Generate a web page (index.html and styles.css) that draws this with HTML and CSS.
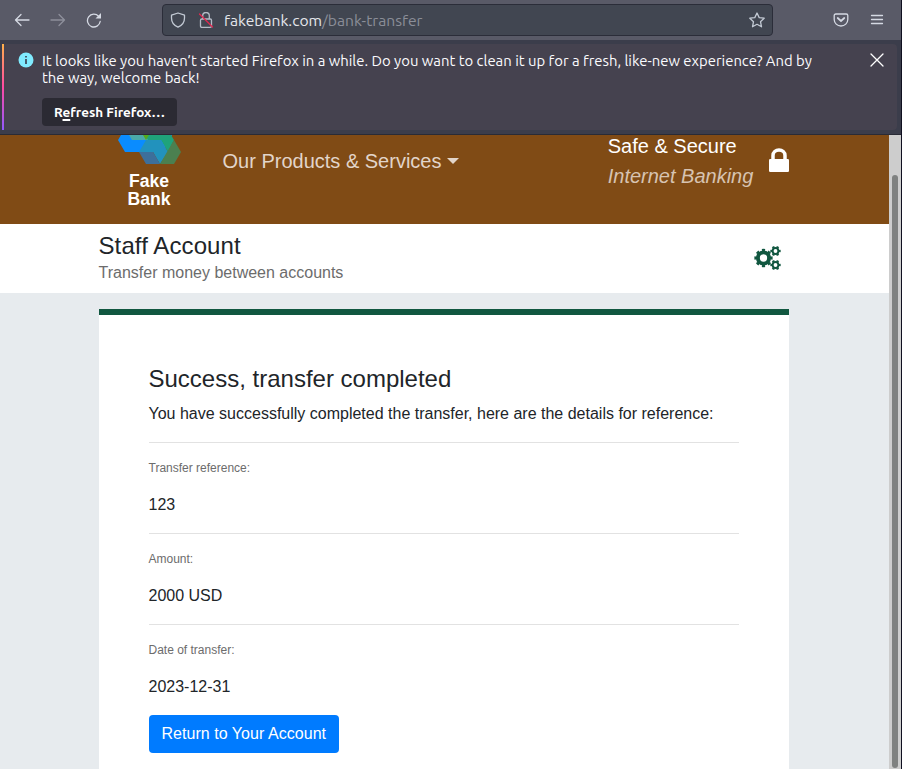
FILE: index.html
```html
<!DOCTYPE html>
<html lang="en">
<head>
<meta charset="utf-8">
<title>Fake Bank</title>
<link rel="stylesheet" href="styles.css">
</head>
<body>
<div class="window">
  <div class="toolbar">
    <svg class="ico back" viewBox="0 0 16 16"><path d="M15 8H1.500M7 2.500L1.500 8L7 13.500"/></svg>
    <svg class="ico forward" viewBox="0 0 16 16"><path d="M1 8H14.500M9 2.500L14.500 8L9 13.500"/></svg>
    <svg class="ico reload" viewBox="0 0 16 16"><path d="M14.200 9.500A6.400 6.400 0 1 1 12.700 4.400"/><path class="solid" d="M15 1V6.500H9.500Z"/></svg>
    <div class="urlbar">
      <svg class="ico shield" viewBox="0 0 16 16"><path d="M8 1L14.500 3.200V6C14.500 10.500 12 13.500 8 15.200C4 13.500 1.500 10.500 1.500 6V3.200Z"/></svg>
      <svg class="ico insecure" viewBox="0 0 16 16"><path d="M4.700 7V3.800A3.300 3.300 0 0 1 11.300 3.800V7M3.800 7H12.200Q13.500 7 13.500 8.300V14Q13.500 15.300 12.200 15.300H3.800Q2.500 15.300 2.500 14V8.300Q2.500 7 3.800 7Z"/><path class="slash" d="M1.500 2L14.500 15"/></svg>
      <span class="url">fakebank.com<span class="path">/bank-transfer</span></span>
      <svg class="ico star" viewBox="0 0 16 16"><path d="M8 1L10.200 5.600L15.200 6.200L11.500 9.700L12.500 14.800L8 12.300L3.500 14.800L4.500 9.700L.8 6.200L5.800 5.600Z"/></svg>
    </div>
    <svg class="ico pocket" viewBox="0 0 16 16"><path d="M2.800 2H13.200Q14.800 2 14.800 3.600V7.500A6.800 6.500 0 0 1 1.200 7.500V3.600Q1.200 2 2.800 2Z"/><path class="bold" d="M4.700 6L8 9L11.300 6"/></svg>
    <svg class="ico menu" viewBox="0 0 16 16"><path d="M2.500 3.500H13.500M2.500 7.500H13.500M2.500 11.500H13.500"/></svg>
  </div>
  <div class="notice-area">
    <div class="notice">
      <svg class="info" viewBox="0 0 16 16"><circle cx="8" cy="8" r="7.500"/><path d="M8 4V5.500M8 7V12"/></svg>
      <div class="notice-body">
        <p>It looks like you haven’t started Firefox in a while. Do you want to clean it up for a fresh, like-new experience? And by<br>the way, welcome back!</p>
        <button class="refresh">R<u>e</u>fresh Firefox…</button>
      </div>
      <svg class="ico close" viewBox="0 0 16 16"><path d="M2 2L14 14M14 2L2 14"/></svg>
    </div>
  </div>
  <div class="viewport">
    <div class="page">
      <header class="header">
        <div class="brand">
          <svg viewBox="0 0 64 30">
            <path fill="#0a8cff" d="M0 5L3 0H54L45 17H7Z"/>
            <path fill="#1fa37a" d="M27 0H53L56 5L50 17L43 5H24Z"/>
            <path fill="#4aa9a9" d="M11 0H27L30 5H14Z"/>
            <path fill="#55ab1c" d="M25 0H31L28 5Z"/>
            <path fill="#2292bd" d="M28 5H43L50 17L42 29L35 17H21Z"/>
            <path fill="#3d6f9b" d="M21 17H35L42 29H28Z"/>
            <path fill="#4b8050" d="M56 5L63 17L56 29H42L49 17Z"/>
          </svg>
          <strong>Fake<br>Bank</strong>
        </div>
        <nav class="nav">Our Products &amp; Services<span class="caret"></span></nav>
        <div class="secure">Safe &amp; Secure<br><em>Internet Banking</em></div>
        <svg class="lock" viewBox="0 0 20 24"><path class="shackle" d="M4 12V7.500A6 5.500 0 0 1 16 7.500V12"/><rect y="11" width="20" height="13" rx="1.200"/></svg>
      </header>
      <section class="subhead">
        <div><h1>Staff Account</h1><p>Transfer money between accounts</p></div>
        <svg class="gears" viewBox="0 0 28 26">
          <circle class="ring" cx="9.500" cy="13" r="5.600"/><circle class="teeth" cx="9.500" cy="13" r="7.900" pathLength="80"/>
          <circle class="ring-s" cx="21.500" cy="6" r="2.900"/><circle class="teeth-s" cx="21.500" cy="6" r="4.200" pathLength="60"/>
          <circle class="ring-s" cx="21.500" cy="20" r="2.900"/><circle class="teeth-s" cx="21.500" cy="20" r="4.200" pathLength="60"/>
        </svg>
      </section>
      <main class="main">
        <article class="card">
          <h2>Success, transfer completed</h2>
          <p>You have successfully completed the transfer, here are the details for reference:</p>
          <hr>
          <p class="label">Transfer reference:</p>
          <p>123</p>
          <hr>
          <p class="label">Amount:</p>
          <p>2000 USD</p>
          <hr>
          <p class="label">Date of transfer:</p>
          <p>2023-12-31</p>
          <a class="btn">Return to Your Account</a>
        </article>
      </main>
    </div>
    <div class="scrollbar"><div class="thumb"></div></div>
  </div>
</div>
</body>
</html>
```
FILE: styles.css
```css
* { box-sizing: border-box; }
body { margin: 0; background: #101020; overflow: hidden; font-family: "Liberation Sans", Arial, sans-serif; }
h1, h2, p { margin: 0; font-weight: 400; }
.window { width: 901px; height: 769px; display: flex; flex-direction: column; }
.toolbar { height: 40px; flex: none; background: #595a67; display: flex; align-items: center; padding: 0 16px 0 14px; font-family: Ubuntu, "Noto Sans", sans-serif; }
.ico { width: 16px; height: 16px; flex: none; fill: none; stroke: #d5d9e3; stroke-width: 1.3; stroke-linecap: round; stroke-linejoin: round; }
.forward { margin-left: 20px; stroke: #8d8f9b; }
.reload { margin-left: 20px; }
.toolbar .solid { fill: #d5d9e3; stroke: none; }
.urlbar { width: 611px; height: 32px; margin-left: 60px; padding: 0 7px; display: flex; align-items: center; background: #414651; border: 1px solid #2b2d39; border-radius: 4px; }
.shield { stroke: #c3cad4; }
.insecure { margin-left: 12px; stroke: #b5bcc7; }
.slash { stroke: #e22850; }
.url { margin-left: 10px; margin-bottom: 1px; font-size: 15.660px; line-height: 20px; color: #e5e7ec; white-space: nowrap; }
.path { color: #8b8e98; }
.star { margin-left: auto; stroke: #c3cad4; }
.pocket { margin-left: 60px; }
.bold { stroke-width: 1.7; }
.menu { margin-left: auto; }
.notice-area { height: 95px; flex: none; background: #3b3d4b; border-bottom: 1px solid #292b36; padding: 4px 4px 4px 2px; }
.notice { height: 86px; display: flex; position: relative; background: #45424f; border-radius: 4px; padding: 8px 12px 0 16px; font-family: Ubuntu, "Noto Sans", sans-serif; }
.notice::before { content: ""; position: absolute; left: 0; top: 0; bottom: 0; width: 2px; background: linear-gradient(#ffb14a, #ff4aa2 50%, #9059ff); }
.info { width: 16px; height: 16px; fill: #80ebff; flex: none; }
.info path { stroke: #35394a; stroke-width: 1.6; }
.notice-body { margin-left: 8px; flex: 1; }
.notice-body p { font-size: 14.860px; line-height: 17px; color: #fbfbfe; white-space: nowrap; }
.refresh { display: block; width: 135px; height: 28px; margin-top: 12px; padding: 0; border: 0; border-radius: 4px; background: #2b2a33; color: #fff; font: 700 13.450px/28px Ubuntu, "Noto Sans", sans-serif; }
.refresh u { text-decoration-thickness: 2px; text-underline-offset: 2px; text-decoration-skip-ink: none; }
.close { stroke: #fff; }
.viewport { flex: 1; display: flex; min-height: 0; }
.page { width: 889px; background: #e7ebee; overflow: hidden; }
.header { height: 89px; background: #804b15; color: #fff; padding: 0 100px 0 117px; display: flex; align-items: flex-start; }
.brand { width: 64px; text-align: center; font-size: 17.600px; line-height: 18px; }
.brand svg { display: block; width: 64px; height: 30px; margin: 0 0 7px .5px; }
.nav { margin-left: 41.500px; padding-top: 11px; font-size: 20px; line-height: 30px; color: #e2d5ca; display: flex; align-items: center; white-space: nowrap; }
.caret { margin-left: 6px; border: 6px solid transparent; border-top-color: #e2d5ca; border-bottom: 0; }
.secure { margin-left: auto; margin-top: -4px; font-size: 20px; line-height: 30px; width: 161.300px; white-space: nowrap; }
.secure em { color: #d7c3b1; }
.lock { width: 20px; height: 24px; margin-top: 13px; fill: #fff; }
.shackle { fill: none; stroke: #fff; stroke-width: 3.5; }
.subhead { height: 69px; background: #fff; padding: 8px 107px 0 98.500px; display: flex; justify-content: space-between; }
.subhead h1, .card h2 { font-size: 24px; line-height: 28.800px; color: #212529; }
.subhead h1 { letter-spacing: .1px; }
.subhead p { font-size: 16px; line-height: 24px; color: #6c6c6c; }
.gears { width: 28px; height: 26px; margin-top: 13px; fill: none; stroke: #115740; }
.ring { stroke-width: 3.9; }
.teeth { stroke-width: 2.5; stroke-dasharray: 5 5; stroke-dashoffset: 2.5; }
.ring-s { stroke-width: 2; }
.teeth-s { stroke-width: 2; stroke-dasharray: 5 5; stroke-dashoffset: 2.5; }
.main { padding: 16px 100px 0 99px; }
.card { height: 560px; background: #fff; border-top: 6px solid #115740; padding: 50px; font-size: 16px; line-height: 24px; color: #212529; }
.card h2 { margin-bottom: 8px; }
.card h2, .card p { margin-left: -.5px; }
.card p { margin-bottom: 16px; }
.card .label { font-size: 12px; line-height: 18px; color: #6c6c6c; }
hr { margin: 0 0 16px; border: 0; border-top: 1px solid #e2e2e2; }
.btn { display: inline-block; width: 190px; height: 38px; padding-left: 12.500px; letter-spacing: .04px; border-radius: 4px; background: #007bff; color: #fff; line-height: 38px; }
.scrollbar { width: 12px; background: #cdcdcd; padding: 40px 3px 1px; }
.thumb { height: 100%; border-radius: 3px; background: #7f8180; }
```
